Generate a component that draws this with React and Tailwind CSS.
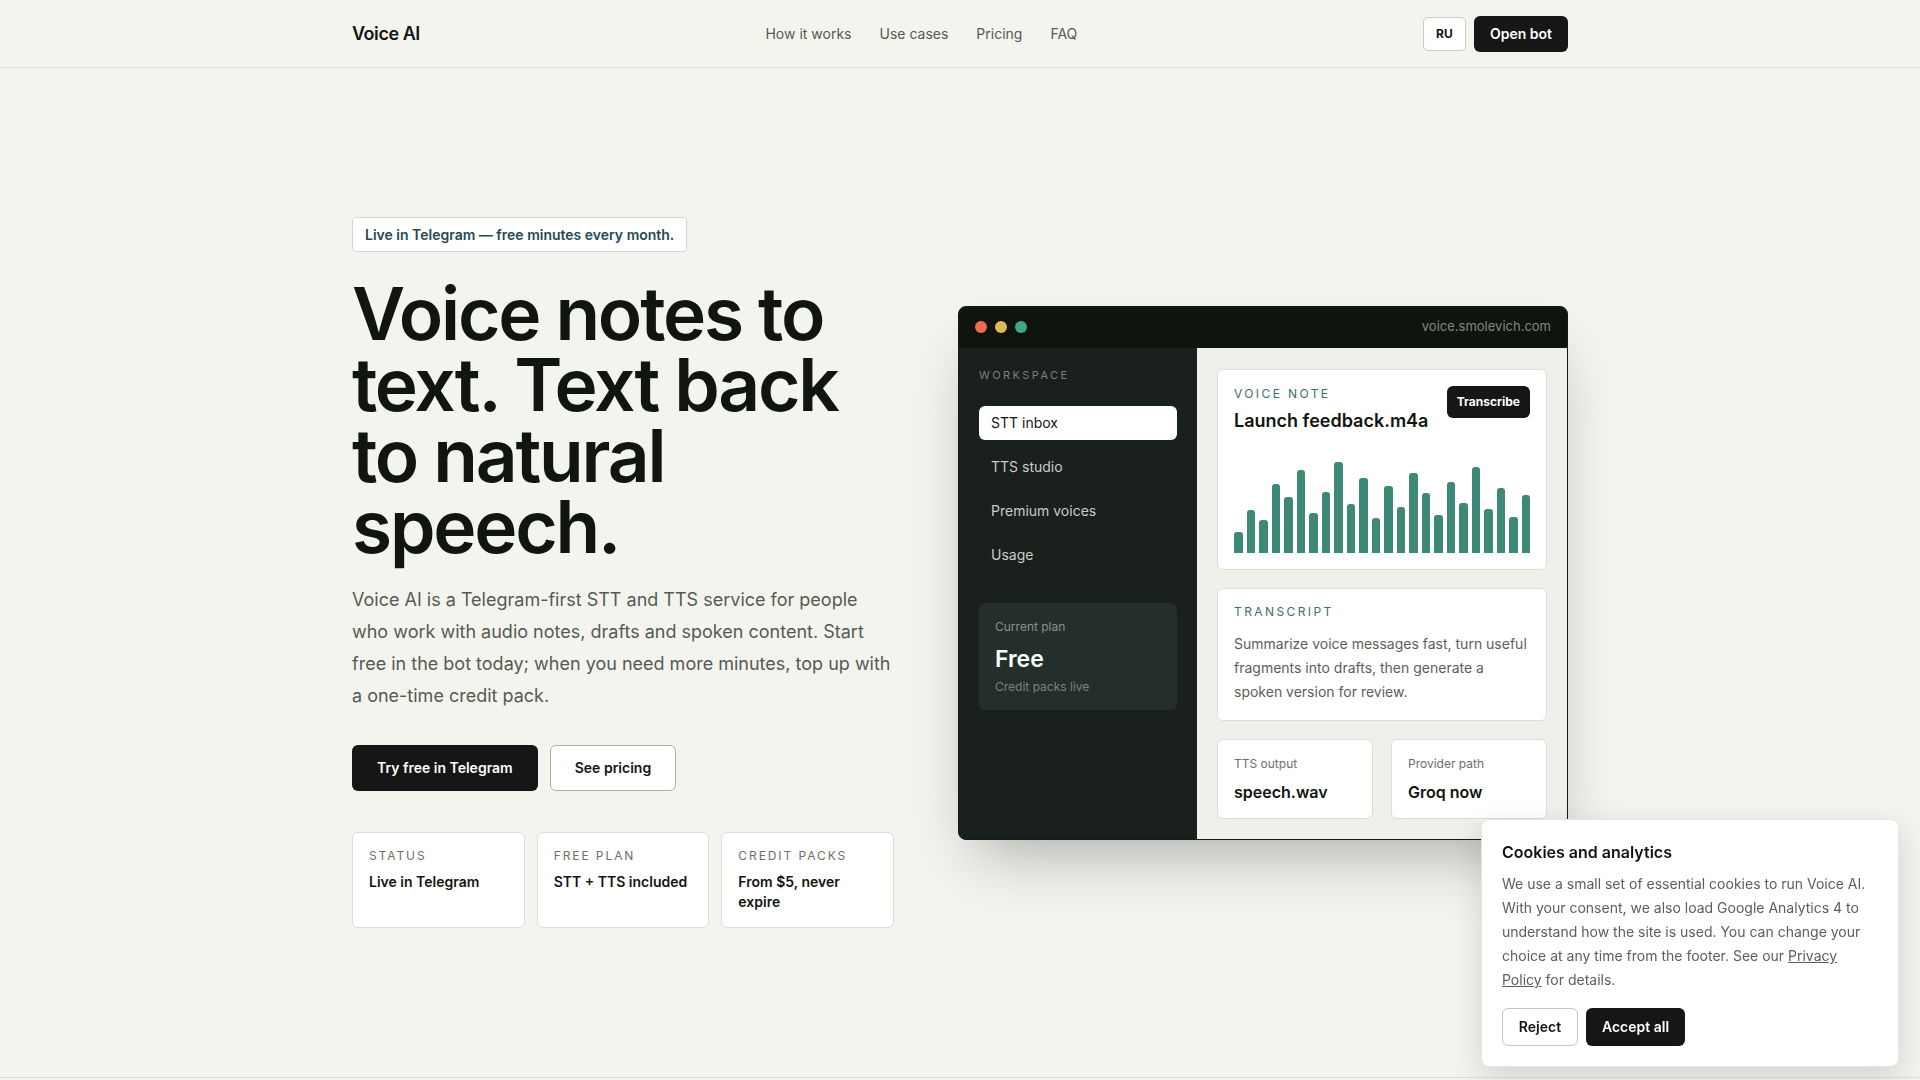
import React from 'react';

const navLinks = ['How it works', 'Use cases', 'Pricing', 'FAQ'];

const sideItems = ['STT inbox', 'TTS studio', 'Premium voices', 'Usage'];

const stats = [
  { label: 'Status', value: 'Live in Telegram' },
  { label: 'Free plan', value: 'STT + TTS included' },
  { label: 'Credit packs', value: 'From $5, never expire' },
];

// waveform bar heights in px
const bars = [21, 43, 33, 69, 56, 83, 40, 61, 91, 49, 75, 35, 67, 46, 80, 60, 38, 71, 50, 86, 44, 65, 36, 58];

const Header = () => (
  <header className="border-b border-[#dcddd5]">
    <div className="max-w-7xl mx-auto px-8 h-[67px] flex items-center justify-between">
      <div className="text-[18px] font-semibold tracking-tight text-[#111510]">Voice AI</div>
      <nav className="flex items-center gap-7 text-sm text-[#565a52]">
        {navLinks.map((link) => (
          <a key={link} href="#">{link}</a>
        ))}
      </nav>
      <div className="flex items-center gap-2">
        <button className="h-[34px] w-[43px] rounded-[5px] border border-[#c9ccc4] bg-white text-xs font-bold text-[#111510]">
          RU
        </button>
        <button className="h-9 px-[16px] rounded-md bg-[#161616] text-sm font-semibold text-white">
          Open bot
        </button>
      </div>
    </div>
  </header>
);

const Mockup = () => (
  <div className="rounded-lg overflow-hidden border border-[#141a16] bg-[#1a201d] shadow-[0_30px_60px_-20px_rgba(20,30,25,0.35)]">
    {/* title bar */}
    <div className="h-[41px] bg-[#10140f] flex items-center justify-between px-[16px]">
      <div className="flex items-center gap-2">
        <span className="w-3 h-3 rounded-full bg-[#ef6b4a]" />
        <span className="w-3 h-3 rounded-full bg-[#e0b955]" />
        <span className="w-3 h-3 rounded-full bg-[#3fa886]" />
      </div>
      <span className="text-[13px] text-[#83877f]">voice.smolevich.com</span>
    </div>

    <div className="flex">
      {/* sidebar */}
      <aside className="w-[238px] shrink-0 bg-[#1a201d] px-[20px] pt-[19px]">
        <div className="text-[11px] uppercase tracking-[0.22em] text-[#7a8078]">Workspace</div>
        <ul className="mt-[23px] flex flex-col gap-[10px]">
          {sideItems.map((item, i) => (
            <li
              key={item}
              className={`h-[34px] px-3 flex items-center rounded-md text-sm ${
                i === 0 ? 'bg-white text-[#111510]' : 'text-[#c9cdc6]'
              }`}
            >
              {item}
            </li>
          ))}
        </ul>
        <div className="mt-[31px] rounded-md bg-[#242e2b] px-4 pt-[16px] pb-[15px]">
          <div className="text-xs leading-4 text-[#8c918a]">Current plan</div>
          <div className="mt-[8px] text-[23px] leading-8 font-semibold text-white">Free</div>
          <div className="mt-[4px] text-xs leading-4 text-[#7d837b]">Credit packs live</div>
        </div>
      </aside>

      {/* main */}
      <div className="flex-1 bg-[#eef0ea] p-5 pt-[21px] flex flex-col gap-[18px]">
        <div className="rounded-md border border-[#dcdfd7] bg-white p-4">
          <div className="flex items-start justify-between">
            <div>
              <div className="text-xs uppercase tracking-[0.2em] text-[#3c6e70]">Voice note</div>
              <div className="mt-[5px] text-[18px] font-semibold text-[#111510]">Launch feedback.m4a</div>
            </div>
            <button className="h-8 px-[10px] rounded-md bg-[#161616] text-xs font-bold text-white">
              Transcribe
            </button>
          </div>
          <div className="mt-[26px] h-[93px] flex items-end gap-[4px]">
            {bars.map((h, i) => (
              <div key={i} className="flex-1 rounded-t-[3px] bg-[#3d8876]" style={{ height: `${h}px` }} />
            ))}
          </div>
        </div>

        <div className="rounded-md border border-[#dcdfd7] bg-white px-4 pt-[15px] pb-4">
          <div className="text-xs leading-4 uppercase tracking-[0.2em] text-[#3c6e70]">Transcript</div>
          <p className="mt-[12px] text-sm leading-6 text-[#5b6058]">
            Summarize voice messages fast, turn useful fragments into drafts, then generate a spoken version for review.
          </p>
        </div>

        <div className="grid grid-cols-2 gap-[18px]">
          <div className="rounded-md border border-[#dcdfd7] bg-white px-4 pt-4 pb-[14px]">
            <div className="text-xs leading-4 text-[#6b7068]">TTS output</div>
            <div className="mt-2 text-base leading-6 font-semibold text-[#111510]">speech.wav</div>
          </div>
          <div className="rounded-md border border-[#dcdfd7] bg-white px-4 pt-4 pb-[14px]">
            <div className="text-xs leading-4 text-[#6b7068]">Provider path</div>
            <div className="mt-2 text-base leading-6 font-semibold text-[#111510]">Groq now</div>
          </div>
        </div>
      </div>
    </div>
  </div>
);

const CookieBanner = () => (
  <div className="fixed right-[21px] bottom-[13px] w-[418px] rounded-lg border border-[#e4e6df] bg-white p-5 shadow-[0_10px_30px_rgba(20,30,25,0.15)]">
    <h3 className="text-base leading-6 font-semibold text-[#111510]">Cookies and analytics</h3>
    <p className="mt-2 text-sm leading-6 text-[#5b6058]">
      We use a small set of essential cookies to run Voice AI. With your consent, we also load Google Analytics 4 to
      understand how the site is used. You can change your choice at any time from the footer. See our{' '}
      <a href="#" className="underline">Privacy Policy</a> for details.
    </p>
    <div className="mt-4 flex gap-2">
      <button className="h-[38px] w-[76px] rounded-md border border-[#c2c6bd] bg-white text-sm font-semibold text-[#111510]">
        Reject
      </button>
      <button className="h-[38px] w-[99px] rounded-md bg-[#161616] text-sm font-semibold text-white">
        Accept all
      </button>
    </div>
  </div>
);

const App = () => {
  return (
    <div className="min-h-screen bg-[#f4f4ef] font-['Inter','Noto_Sans',sans-serif] text-[#111510]">
      <Header />

      <section className="border-b border-[#dcddd5]">
        <div className="max-w-7xl mx-auto px-8 py-[149px] grid grid-cols-[542px_1fr] gap-16 items-center">
          {/* left column */}
          <div>
            <div className="inline-flex h-[35px] items-center rounded-[4px] border border-[#d3d7cf] bg-white px-[12px] text-sm font-semibold text-[#264a4f]">
              Live in Telegram — free minutes every month.
            </div>
            <h1 className="mt-[26px] text-[73px] leading-[71px] font-semibold tracking-[-0.03em] text-[#111510]">
              Voice notes to text. Text back to natural speech.
            </h1>
            <p className="mt-[22px] text-lg leading-8 text-[#565a52]">
              Voice AI is a Telegram-first STT and TTS service for people who work with audio notes, drafts and spoken
              content. Start free in the bot today; when you need more minutes, top up with a one-time credit pack.
            </p>
            <div className="mt-[33px] flex gap-3">
              <button className="h-[46px] px-[25px] rounded-md bg-[#161616] text-sm font-semibold text-white">
                Try free in Telegram
              </button>
              <button className="h-[46px] px-6 rounded-md border border-[#a9b0a5] bg-white text-sm font-semibold text-[#111510]">
                See pricing
              </button>
            </div>
            <div className="mt-[41px] grid grid-cols-3 gap-3">
              {stats.map((s) => (
                <div key={s.label} className="h-24 rounded-md border border-[#dcddd5] bg-white px-4 pt-[15px]">
                  <div className="text-xs uppercase tracking-[0.16em] text-[#6b7068]">{s.label}</div>
                  <div className="mt-[8px] text-sm leading-5 font-semibold text-[#111510]">{s.value}</div>
                </div>
              ))}
            </div>
          </div>

          {/* right column */}
          <Mockup />
        </div>
      </section>

      <div className="h-[200px]" />

      <CookieBanner />
    </div>
  );
};

export default App;
